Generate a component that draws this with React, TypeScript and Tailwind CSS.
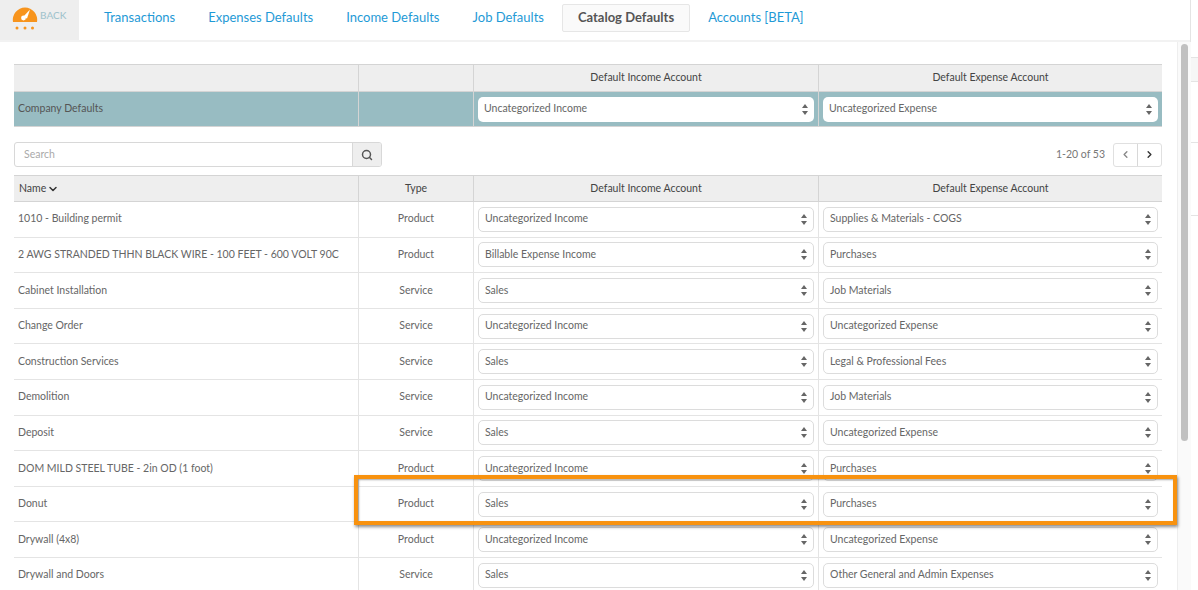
import React from "react";
import { Search, ChevronLeft, ChevronRight, ChevronDown } from "lucide-react";

const rows: [string, string, string, string][] = [
  ["1010 - Building permit", "Product", "Uncategorized Income", "Supplies & Materials - COGS"],
  ["2 AWG STRANDED THHN BLACK WIRE - 100 FEET - 600 VOLT 90C", "Product", "Billable Expense Income", "Purchases"],
  ["Cabinet Installation", "Service", "Sales", "Job Materials"],
  ["Change Order", "Service", "Uncategorized Income", "Uncategorized Expense"],
  ["Construction Services", "Service", "Sales", "Legal & Professional Fees"],
  ["Demolition", "Service", "Uncategorized Income", "Job Materials"],
  ["Deposit", "Service", "Sales", "Uncategorized Expense"],
  ["DOM MILD STEEL TUBE - 2in OD (1 foot)", "Product", "Uncategorized Income", "Purchases"],
  ["Donut", "Product", "Sales", "Purchases"],
  ["Drywall (4x8)", "Product", "Uncategorized Income", "Uncategorized Expense"],
  ["Drywall and Doors", "Service", "Sales", "Other General and Admin Expenses"],
];

const tabs = ["Transactions", "Expenses Defaults", "Income Defaults", "Job Defaults", "Catalog Defaults", "Accounts [BETA]"];

function Sel({ label, bare }: { label: string; bare?: boolean }) {
  return (
    <div className={`flex h-[25px] w-full items-center justify-between rounded-[5px] bg-white pl-[6px] pr-[6px] text-[#666] ${bare ? "" : "border border-[#dcdcdc]"}`}>
      <span>{label}</span>
      <svg width="6" height="11" viewBox="0 0 6 11" className="fill-[#666]">
        <path d="M3 0 L6 4 H0 Z" />
        <path d="M3 11 L6 7 H0 Z" />
      </svg>
    </div>
  );
}

function Logo() {
  return (
    <svg width="26" height="28" viewBox="0 0 26 28">
      <path d="M1 19 A12.2 12.2 0 1 1 25 19 Z" fill="#f7941d" />
      <path d="M11 14 L18 6.5 L15 15.5 Z" fill="#fff" />
      <circle cx="11.5" cy="15" r="2.4" fill="#fff" />
      <circle cx="5" cy="25" r="1.5" fill="#f7941d" />
      <circle cx="13" cy="25" r="1.5" fill="#f7941d" />
      <circle cx="20.5" cy="25" r="1.5" fill="#f7941d" />
    </svg>
  );
}

export default function App() {
  return (
    <div className="relative flex h-[590px] w-[1198px] overflow-hidden bg-white font-['Lato','Liberation_Sans',sans-serif] text-[10.5px] text-[#666]">
      <div className="flex w-[1191px] shrink-0 flex-col border-r border-[#e4e4e4]">
        <header className="flex h-[42px] shrink-0 border-b-2 border-[#f2f2f2]">
          <div className="flex w-[79px] items-start bg-[#eeeeee] pl-[12px] pt-[3px]">
            <Logo />
            <span className="ml-[2px] mt-[5px] text-[10px] font-medium text-[#a2c4cd]">BACK</span>
          </div>
          <nav className="flex items-start gap-[3px] pl-[10px] pt-[4px] text-[13px] text-[#1f9ad6]">
            {tabs.map((t, i) => (
              <span
                key={t}
                className={`flex h-[28px] items-center rounded-[2px] px-[15px] ${
                  i === 4 ? "border border-[#e6e6e6] bg-[#fafafa] font-bold text-[#555]" : ""
                }`}
              >
                {t}
              </span>
            ))}
          </nav>
        </header>

        <div className="flex min-h-0 flex-1">
          <main className="w-[1177px] shrink-0 pl-[14px] pr-[15px] pt-[22px]">
            <div className="grid grid-cols-[345px_115px_345px_343px] border-t border-[#d4d4d4]">
              <div className="h-[27px] border-b border-r border-[#d4d4d4] bg-[#eeeeee]" />
              <div className="h-[27px] border-b border-r border-[#d4d4d4] bg-[#eeeeee]" />
              <div className="flex h-[27px] items-center justify-center border-b border-r border-[#d4d4d4] bg-[#eeeeee] text-[#444]">Default Income Account</div>
              <div className="flex h-[27px] items-center justify-center border-b border-[#d4d4d4] bg-[#eeeeee] text-[#444]">Default Expense Account</div>
              <div className="flex h-[35px] items-center border-b border-r border-[#d4d4d4] bg-[#98bcc2] pl-[4px] text-[#555]">Company Defaults</div>
              <div className="h-[35px] border-b border-r border-[#d4d4d4] bg-[#98bcc2]" />
              <div className="flex h-[35px] items-center border-b border-r border-[#d4d4d4] bg-[#98bcc2] px-[4px]"><Sel bare label="Uncategorized Income" /></div>
              <div className="flex h-[35px] items-center border-b border-[#d4d4d4] bg-[#98bcc2] px-[4px]"><Sel bare label="Uncategorized Expense" /></div>
            </div>

            <div className="mt-[15px] flex h-[25px] items-center justify-between">
              <div className="flex h-[25px] w-[368px] overflow-hidden rounded-[3px] border border-[#d8d8d8]">
                <span className="flex flex-1 items-center pl-[9px] text-[#aaa]">Search</span>
                <span className="flex w-[29px] items-center justify-center border-l border-[#d8d8d8] bg-[#eeeeee]">
                  <Search size={12} strokeWidth={3} className="text-[#555]" />
                </span>
              </div>
              <div className="flex items-center">
                <span className="mr-[8px] text-[#777]">1-20 of 53</span>
                <div className="flex h-[24px] rounded-[3px] border border-[#e0e0e0]">
                  <span className="flex w-[24px] items-center justify-center border-r border-[#d8d8d8]"><ChevronLeft size={11} strokeWidth={3} className="text-[#888]" /></span>
                  <span className="flex w-[23px] items-center justify-center"><ChevronRight size={11} strokeWidth={3} className="text-[#333]" /></span>
                </div>
              </div>
            </div>

            <div className="mt-[8px] grid grid-cols-[345px_115px_345px_343px] border-t border-[#d4d4d4]">
              <div className="flex h-[26px] items-center border-b border-r border-[#d4d4d4] bg-[#eeeeee] pl-[5px] text-[#444]">
                Name<ChevronDown size={12} strokeWidth={3} className="ml-[1px] text-[#333]" />
              </div>
              <div className="flex h-[26px] items-center justify-center border-b border-r border-[#d4d4d4] bg-[#eeeeee] text-[#444]">Type</div>
              <div className="flex h-[26px] items-center justify-center border-b border-r border-[#d4d4d4] bg-[#eeeeee] text-[#444]">Default Income Account</div>
              <div className="flex h-[26px] items-center justify-center border-b border-[#d4d4d4] bg-[#eeeeee] text-[#444]">Default Expense Account</div>
              {rows.map((r) => (
                <React.Fragment key={r[0]}>
                  <div className="flex h-[35.6px] items-center border-b border-r border-[#e4e4e4] pl-[4px]">{r[0]}</div>
                  <div className="flex h-[35.6px] items-center justify-center border-b border-r border-[#e4e4e4]">{r[1]}</div>
                  <div className="flex h-[35.6px] items-center border-b border-r border-[#e4e4e4] px-[4px]"><Sel label={r[2]} /></div>
                  <div className="flex h-[35.6px] items-center border-b border-[#e4e4e4] px-[4px]"><Sel label={r[3]} /></div>
                </React.Fragment>
              ))}
            </div>
          </main>
          <div className="flex-1 border-l border-[#eeeeee] bg-[#fafafa] px-[3px] pt-[2px]">
            <div className="h-[397px] w-[7px] rounded-full bg-[#c1c1c1]" />
          </div>
        </div>
      </div>

      <aside className="flex-1">
        <div className="mt-[57px] h-[25px] border-y border-[#e4e4e4] bg-[#f6f6f6]" />
        <div className="mt-[60px] h-[74px] border-y border-[#e4e4e4]" />
      </aside>

      <div className="absolute left-[354px] top-[475px] h-[50px] w-[823px] border-[4px] border-[#f8920f] shadow-[1px_2px_3px_rgba(0,0,0,0.45),inset_1px_1px_2px_rgba(0,0,0,0.35)]" />
    </div>
  );
}
